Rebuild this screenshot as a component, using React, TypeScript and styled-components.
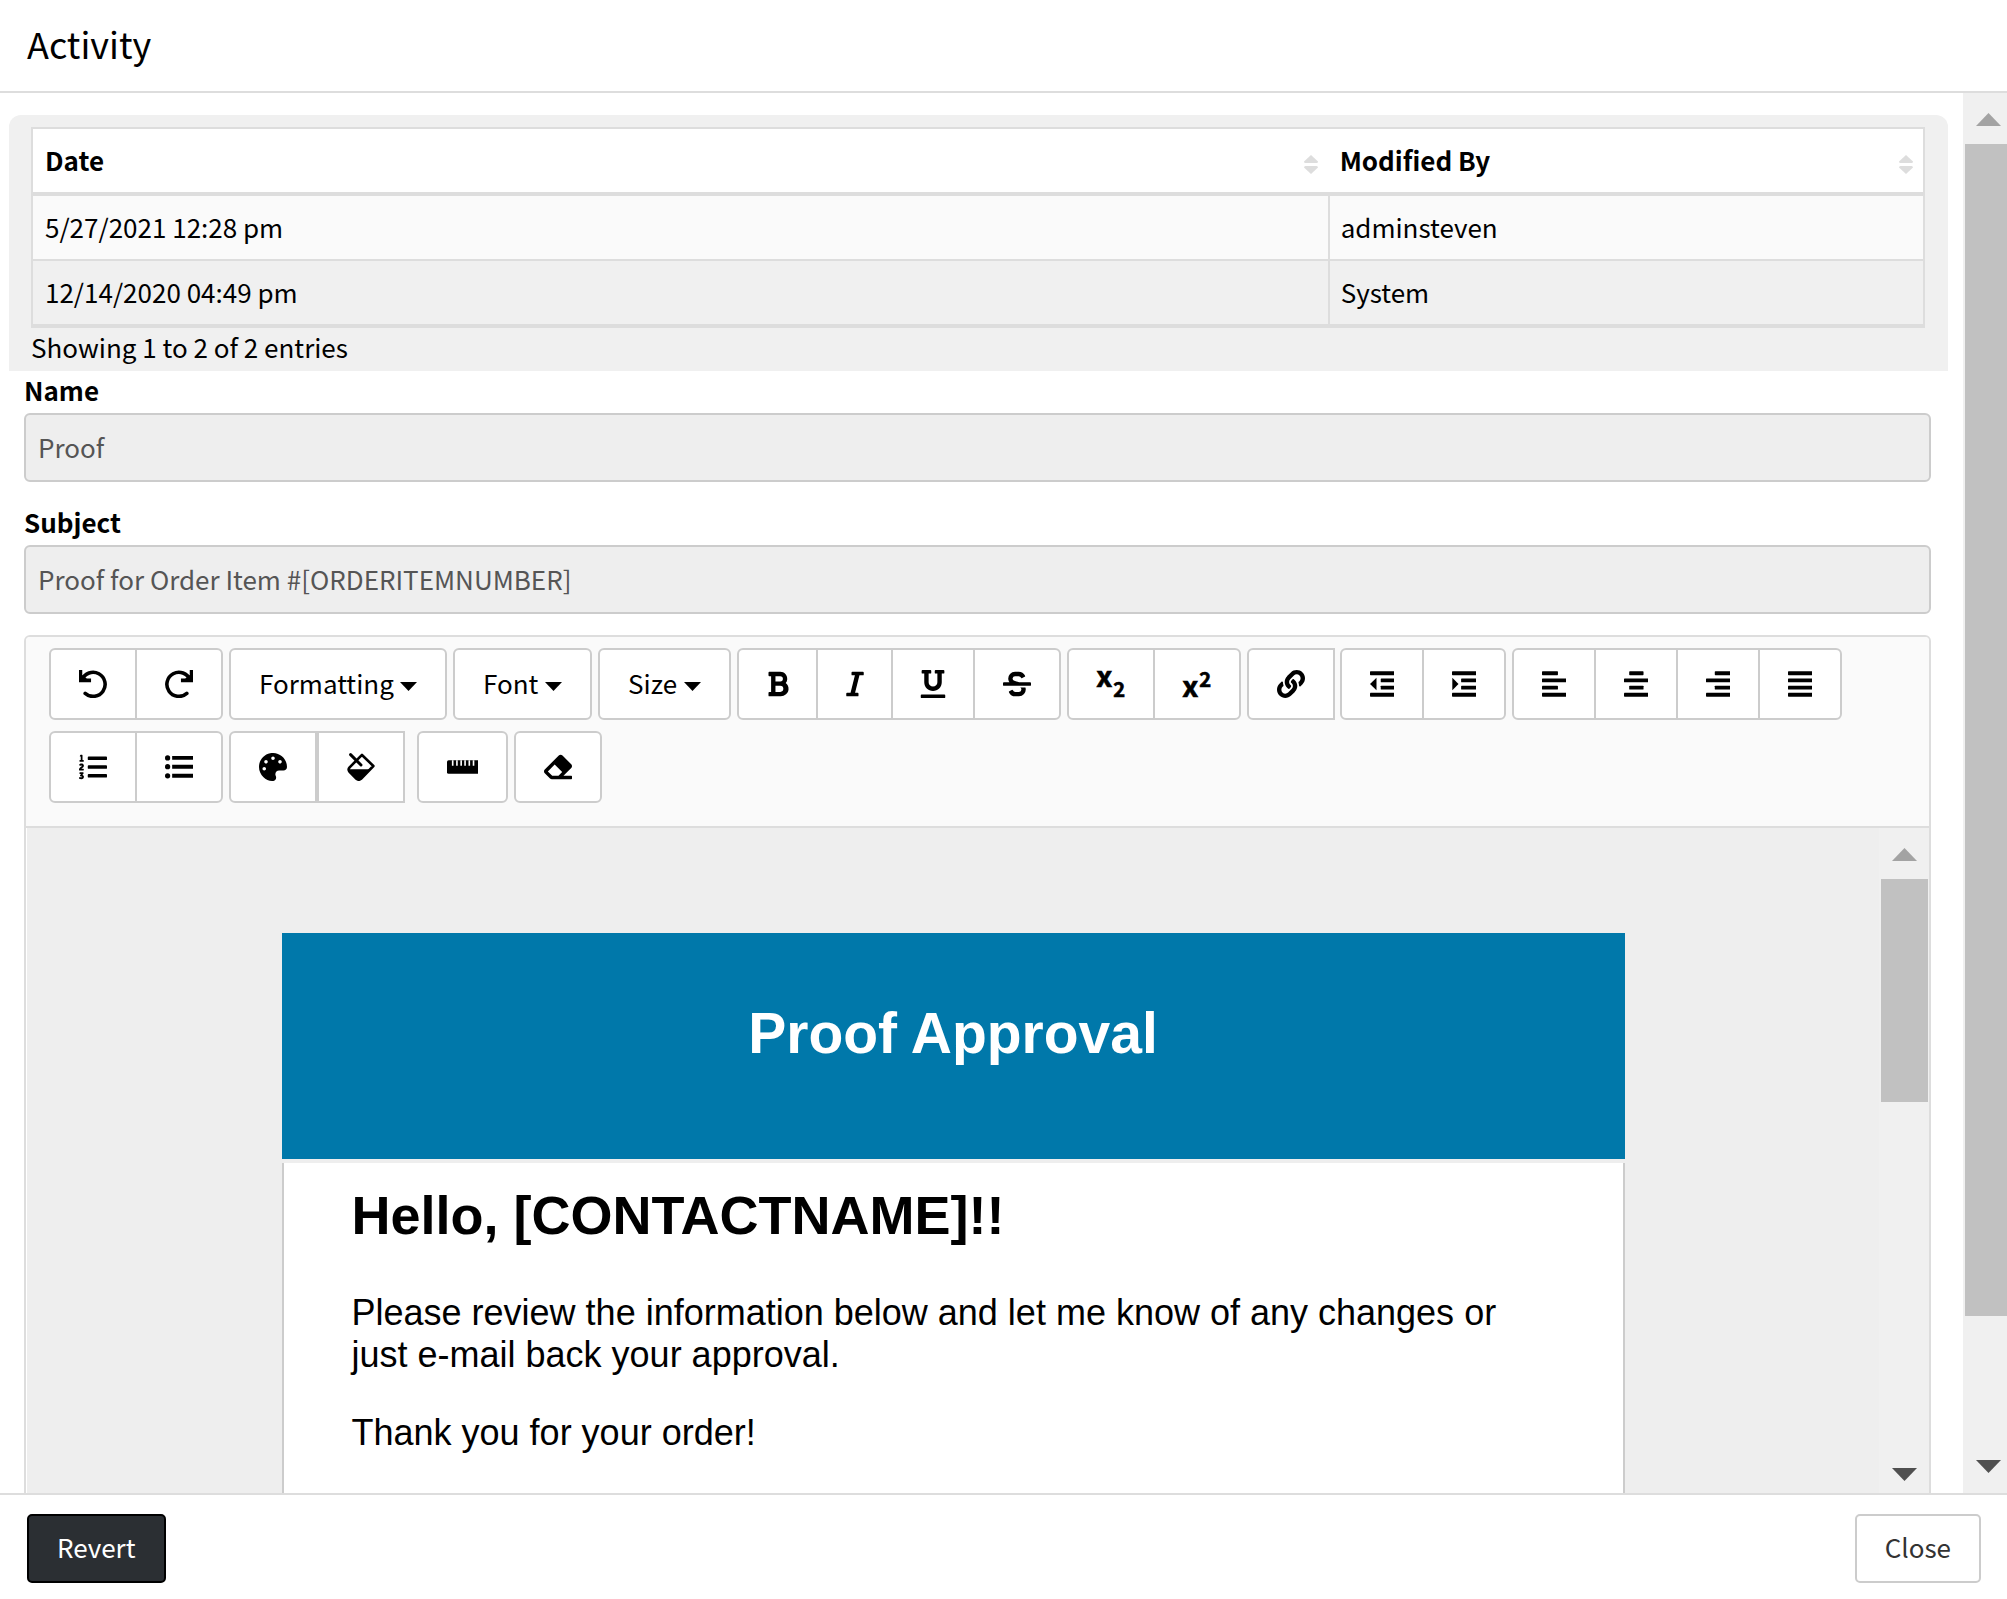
import React from "react";
import styled, { createGlobalStyle, css } from "styled-components";
import {
  FaBold,
  FaEraser,
  FaItalic,
  FaLink,
  FaListOl,
  FaPalette,
  FaStrikethrough,
  FaUnderline,
} from "react-icons/fa";

const line = "#dddddd";
const control = "#cccccc";

const GlobalStyle = createGlobalStyle`
  *, *::before, *::after { box-sizing: border-box; }
  body {
    margin: 0;
    background: #ffffff;
    color: #000000;
    font-family: "Noto Sans CJK SC", "Noto Sans", sans-serif;
    font-size: 26px;
    line-height: 37px;
  }
  button, input, select { font: inherit; color: inherit; margin: 0; }
`;

const Dialog = styled.div`
  display: flex;
  flex-direction: column;
  height: 100vh;
  overflow: hidden;
`;

const Header = styled.header`
  padding: 13px 27px 18px;
  border-bottom: 2px solid ${line};
`;

const Title = styled.h1`
  margin: 0;
  font-size: 36px;
  line-height: 60px;
  font-weight: 400;
`;

const Body = styled.main`
  display: flex;
  flex: 1;
  min-height: 0;
  overflow: hidden;
`;

const Content = styled.div`
  flex: 1;
  min-width: 0;
  overflow: hidden;
`;

const History = styled.section`
  margin: 22px 15px 0 9px;
  padding: 12px 23px 0 22px;
  background: #f0f0f0;
  border-radius: 12px 12px 0 0;
`;

const Table = styled.table`
  width: 100%;
  table-layout: fixed;
  border: 2px solid ${line};
  border-bottom-width: 4px;
  border-collapse: separate;
  border-spacing: 0;
  background: #ffffff;
`;

const HeadCell = styled.th<{ $width?: string }>`
  width: ${(p) => p.$width ?? "auto"};
  height: 67px;
  padding: 0 10px 3px 12px;
  border-bottom: 4px solid ${line};
  text-align: left;
  font-weight: 700;
`;

const HeadInner = styled.div`
  display: flex;
  align-items: center;
  justify-content: space-between;
  & > svg { margin-top: 10px; }
`;

const Row = styled.tr`
  background: #fafafa;
  & + & { background: #f0f0f0; }
  & + & td { border-top: 2px solid ${line}; height: 65px; }
`;

const Cell = styled.td`
  height: 63px;
  padding: 0 12px 3px;
  & + & { padding-left: 11px; border-left: 2px solid ${line}; }
`;

const Info = styled.div`
  height: 43px;
`;

const Form = styled.form`
  display: flex;
  flex-direction: column;
  gap: 21px;
  padding: 0 32px 0 24px;
`;

const Field = styled.div`
  display: flex;
  flex-direction: column;
`;

const Label = styled.label`
  padding-bottom: 5px;
  font-weight: 700;
`;

const TextBox = styled.input`
  width: 100%;
  height: 69px;
  padding: 0 12px 3px;
  border: 2px solid ${control};
  border-radius: 6px;
  background: #eeeeee;
  color: #555555;
`;

const Editor = styled.div`
  border: 2px solid ${line};
  border-radius: 6px;
  background: #ffffff;
`;

const Toolbar = styled.div`
  display: flex;
  flex-wrap: wrap;
  gap: 11px 6px;
  padding: 11px 23px 23px;
  border-bottom: 2px solid ${line};
  border-radius: 4px 4px 0 0;
  background: #fafafa;
`;

const Group = styled.div<{ $open?: boolean; $split?: boolean; $after?: number }>`
  display: flex;
  margin-right: ${(p) => p.$after ?? 0}px;
  & > button:first-child { border-radius: 6px 0 0 6px; }
  & > button:last-child { border-radius: ${(p) => (p.$open ? "0" : "0 6px 6px 0")}; }
  & > button:only-child { border-radius: ${(p) => (p.$open ? "6px 0 0 6px" : "6px")}; }
  ${(p) =>
    !p.$split &&
    css`
      & > button + button { margin-left: -2px; }
    `}
`;

const Tool = styled.button`
  display: flex;
  align-items: center;
  justify-content: center;
  height: 72px;
  padding: 0 28px 1px;
  border: 2px solid ${control};
  background: #ffffff;
`;

const Glyph = styled.span<{ $w: number }>`
  display: flex;
  align-items: center;
  justify-content: center;
  width: ${(p) => p.$w}px;
  height: 28px;
  & > svg { flex: none; width: auto; height: 28px; }
`;

const Picker = styled.div`
  position: relative;
  display: flex;
`;

const PickerSelect = styled.select`
  appearance: none;
  height: 72px;
  padding: 0 51px 3px 28px;
  border: 2px solid ${control};
  border-radius: 6px;
  background: #ffffff;
`;

const Caret = styled.svg`
  position: absolute;
  top: 34px;
  right: 30px;
  pointer-events: none;
`;

const Canvas = styled.div`
  display: flex;
  height: 673px;
  padding-left: 1px;
`;

const Message = styled.div`
  flex: 1;
  min-width: 0;
  padding-top: 105px;
  background: #eeeeee;
  overflow: hidden;
  font-family: "Liberation Sans", Arial, sans-serif;
`;

const Mail = styled.article`
  width: 73%;
  max-width: 1343px;
  min-height: 100%;
  margin: 0 auto;
  display: flex;
  flex-direction: column;
  gap: 4px;
`;

const Banner = styled.h2`
  margin: 0;
  padding: 68px 0 94px;
  background: #0078aa;
  color: #ffffff;
  font-size: 57px;
  line-height: 64px;
  font-weight: 700;
  text-align: center;
`;

const MailBody = styled.div`
  flex: 1;
  padding: 20px 68px 60px;
  border: solid ${control};
  border-width: 0 2px;
  background: #ffffff;
  font-size: 36px;
  line-height: 42px;
`;

const Greeting = styled.h3`
  margin: 0 0 45px;
  font-size: 54px;
  line-height: 64px;
  font-weight: 700;
`;

const Paragraph = styled.p`
  margin: 0 0 36px;
`;

const Track = styled.div<{ $clip?: number }>`
  display: flex;
  flex-direction: column;
  flex: none;
  width: 50px;
  margin-right: -${(p) => p.$clip ?? 0}px;
  padding: 0 1px 0 2px;
  background: #f0f0f0;
`;

const TrackEnd = styled.div`
  display: flex;
  flex: none;
  align-items: center;
  justify-content: center;
  height: 51px;
  padding-top: 1px;
  &:last-child { padding: 0 0 3px; }
`;

const Rail = styled.div`
  flex: 1;
`;

const Thumb = styled.div<{ $size: string }>`
  height: ${(p) => p.$size};
  background: #c1c1c1;
`;

const Footer = styled.footer`
  display: flex;
  justify-content: space-between;
  padding: 19px 26px 16px 27px;
  border-top: 2px solid ${line};
`;

const Action = styled.button<{ $dark?: boolean }>`
  height: 69px;
  padding: 0 28px 4px;
  border: 2px solid ${(p) => (p.$dark ? "#000000" : control)};
  border-radius: 5px;
  background: ${(p) => (p.$dark ? "#2b2f33" : "#ffffff")};
  color: ${(p) => (p.$dark ? "#ffffff" : "#333333")};
`;

const SortMark = () => (
  <svg width="14" height="19" viewBox="0 0 14 19" fill="#dddddd">
    <path d="M7 0L14 6.500Q14 8 12.500 8H1.500Q0 8 0 6.500Z" />
    <path d="M7 19L14 12.500Q14 11 12.500 11H1.500Q0 11 0 12.500Z" />
  </svg>
);

const Turn = ({ flip }: { flip?: boolean }) => (
  <svg viewBox="0 0 86 86">
    <g transform={flip ? "translate(86 0) scale(-1 1)" : undefined}>
      <path d="M9 30A37 37 0 1 1 19 72" fill="none" stroke="#000" strokeWidth="11" strokeLinecap="round" />
      <path d="M0 0H10V15L24 26H37V38H0Z" />
    </g>
  </svg>
);

const Bulleted = () => (
  <svg viewBox="0 0 86 86">
    <path d="M22 9h64v12H22zM22 36h64v12H22zM22 64h64v12H22z" />
    <circle cx="8" cy="15" r="8" />
    <circle cx="8" cy="42" r="8" />
    <circle cx="8" cy="70" r="8" />
  </svg>
);

const Script = ({ base, index }: { base: number; index: number }) => (
  <svg viewBox="0 0 86 86" overflow="visible">
    <g fontWeight="700" fontFamily="Noto Sans CJK SC, sans-serif" stroke="#000" strokeWidth="2">
      <text x="-2" y={base} fontSize="88">x</text>
      <text x="50" y={index} fontSize="62">2</text>
    </g>
  </svg>
);

const Bucket = () => (
  <svg viewBox="0 0 86 86">
    <path
      d="M46 6L81 40L43 79Q36 85 29 79L8 58Q2 51 8 44Z"
      fill="none"
      stroke="#000"
      strokeWidth="8"
      strokeLinejoin="round"
    />
    <path d="M3 50H72L42 82Q36 86 29 81L7 60Q3 55 3 50Z" />
    <path d="M11 5L43 37" stroke="#000" strokeWidth="9" strokeLinecap="round" />
  </svg>
);

const Ruler = () => (
  <svg viewBox="0 0 98 86">
    <rect y="22" width="98" height="42" rx="5" />
    <path d="M15 22h5v17h-5zM28 22h5v17h-5zM41 22h5v17h-5zM53 22h5v17h-5zM66 22h5v17h-5zM79 22h5v17h-5z" fill="#fff" />
  </svg>
);

const Lines = ({ bars, arrow }: { bars: [number, number][]; arrow?: string }) => (
  <svg viewBox="0 0 76 86">
    {bars.map(([x, w], i) => (
      <rect key={i} x={x} y={4 + i * 22} width={w} height="12" rx="2" />
    ))}
    {arrow && <path d={arrow} />}
  </svg>
);

const full: [number, number] = [0, 76];

type ToolItem = { name: string; width: number; icon: React.ReactNode };
type GroupItem = { tools: ToolItem[]; open?: boolean; split?: boolean; after?: number };

const history: GroupItem = {
  tools: [
    { name: "Undo", width: 28, icon: <Turn /> },
    { name: "Redo", width: 28, icon: <Turn flip /> },
  ],
};

const pickers = ["Formatting", "Font", "Size"];

const groups: GroupItem[] = [
  {
    tools: [
      { name: "Bold", width: 21, icon: <FaBold /> },
      { name: "Italic", width: 17, icon: <FaItalic /> },
      { name: "Underline", width: 24, icon: <FaUnderline /> },
      { name: "Strikethrough", width: 28, icon: <FaStrikethrough /> },
    ],
  },
  {
    tools: [
      { name: "Subscript", width: 28, icon: <Script base={53} index={82} /> },
      { name: "Superscript", width: 28, icon: <Script base={82} index={53} /> },
    ],
  },
  { open: true, after: -1, tools: [{ name: "Link", width: 28, icon: <FaLink /> }] },
  {
    tools: [
      { name: "Outdent", width: 24, icon: <Lines bars={[full, [33, 43], [33, 43], full]} arrow="M0 43L20 24V62Z" /> },
      { name: "Indent", width: 24, icon: <Lines bars={[full, [28, 48], [28, 48], full]} arrow="M20 43L1 24V62Z" /> },
    ],
  },
  {
    tools: [
      { name: "Align left", width: 24, icon: <Lines bars={[[0, 49], full, [0, 49], full]} /> },
      { name: "Align center", width: 24, icon: <Lines bars={[[16, 44], full, [16, 44], full]} /> },
      { name: "Align right", width: 24, icon: <Lines bars={[[27, 49], full, [27, 49], full]} /> },
      { name: "Justify", width: 24, icon: <Lines bars={[full, full, full, full]} /> },
    ],
  },
  {
    tools: [
      { name: "Numbered list", width: 28, icon: <FaListOl /> },
      { name: "Bulleted list", width: 28, icon: <Bulleted /> },
    ],
  },
  {
    open: true,
    split: true,
    after: 6,
    tools: [
      { name: "Text color", width: 28, icon: <FaPalette /> },
      { name: "Background color", width: 28, icon: <Bucket /> },
    ],
  },
  { tools: [{ name: "Ruler", width: 31, icon: <Ruler /> }] },
  { tools: [{ name: "Clear formatting", width: 28, icon: <FaEraser /> }] },
];

const ToolGroup = ({ group }: { group: GroupItem }) => (
  <Group $open={group.open} $split={group.split} $after={group.after}>
    {group.tools.map((tool) => (
      <Tool key={tool.name} type="button" aria-label={tool.name}>
        <Glyph $w={tool.width}>{tool.icon}</Glyph>
      </Tool>
    ))}
  </Group>
);

const Scrollbar = ({ size, clip }: { size: string; clip?: number }) => (
  <Track $clip={clip} aria-hidden="true">
    <TrackEnd>
      <svg width="25" height="13" viewBox="0 0 25 13">
        <path d="M12.500 0L25 13H0Z" fill="#a3a3a3" />
      </svg>
    </TrackEnd>
    <Rail>
      <Thumb $size={size} />
    </Rail>
    <TrackEnd>
      <svg width="25" height="13" viewBox="0 0 25 13">
        <path d="M0 0H25L12.500 13Z" fill="#505050" />
      </svg>
    </TrackEnd>
  </Track>
);

const revisions = [
  { date: "5/27/2021 12:28 pm", by: "adminsteven" },
  { date: "12/14/2020 04:49 pm", by: "System" },
];

export default function App() {
  return (
    <>
      <GlobalStyle />
      <Dialog role="dialog" aria-labelledby="dialog-title">
        <Header>
          <Title id="dialog-title">Activity</Title>
        </Header>
        <Body>
          <Content>
            <History>
              <Table>
                <thead>
                  <tr>
                    <HeadCell $width="68.5%" scope="col">
                      <HeadInner>
                        Date
                        <SortMark />
                      </HeadInner>
                    </HeadCell>
                    <HeadCell scope="col">
                      <HeadInner>
                        Modified By
                        <SortMark />
                      </HeadInner>
                    </HeadCell>
                  </tr>
                </thead>
                <tbody>
                  {revisions.map((r) => (
                    <Row key={r.date}>
                      <Cell>{r.date}</Cell>
                      <Cell>{r.by}</Cell>
                    </Row>
                  ))}
                </tbody>
              </Table>
              <Info>Showing 1 to 2 of 2 entries</Info>
            </History>
            <Form onSubmit={(e) => e.preventDefault()}>
              <Field>
                <Label htmlFor="name">Name</Label>
                <TextBox id="name" type="text" readOnly value="Proof" />
              </Field>
              <Field>
                <Label htmlFor="subject">Subject</Label>
                <TextBox id="subject" type="text" readOnly value="Proof for Order Item #[ORDERITEMNUMBER]" />
              </Field>
              <Editor>
                <Toolbar role="toolbar" aria-label="Message formatting">
                  <ToolGroup group={history} />
                  {pickers.map((name) => (
                    <Picker key={name}>
                      <PickerSelect aria-label={name}>
                        <option>{name}</option>
                      </PickerSelect>
                      <Caret width="17" height="9" viewBox="0 0 17 9">
                        <path d="M0 0H17L8.500 9Z" />
                      </Caret>
                    </Picker>
                  ))}
                  {groups.map((group) => (
                    <ToolGroup key={group.tools[0].name} group={group} />
                  ))}
                </Toolbar>
                <Canvas>
                  <Message>
                    <Mail>
                      <Banner>Proof Approval</Banner>
                      <MailBody>
                        <Greeting>Hello, [CONTACTNAME]!!</Greeting>
                        <Paragraph>
                          Please review the information below and let me know of any changes or just e-mail back your
                          approval.
                        </Paragraph>
                        <Paragraph>Thank you for your order!</Paragraph>
                      </MailBody>
                    </Mail>
                  </Message>
                  <Scrollbar size="39%" />
                </Canvas>
              </Editor>
            </Form>
          </Content>
          <Scrollbar size="90.3%" clip={6} />
        </Body>
        <Footer>
          <Action type="button" $dark>
            Revert
          </Action>
          <Action type="button">Close</Action>
        </Footer>
      </Dialog>
    </>
  );
}
